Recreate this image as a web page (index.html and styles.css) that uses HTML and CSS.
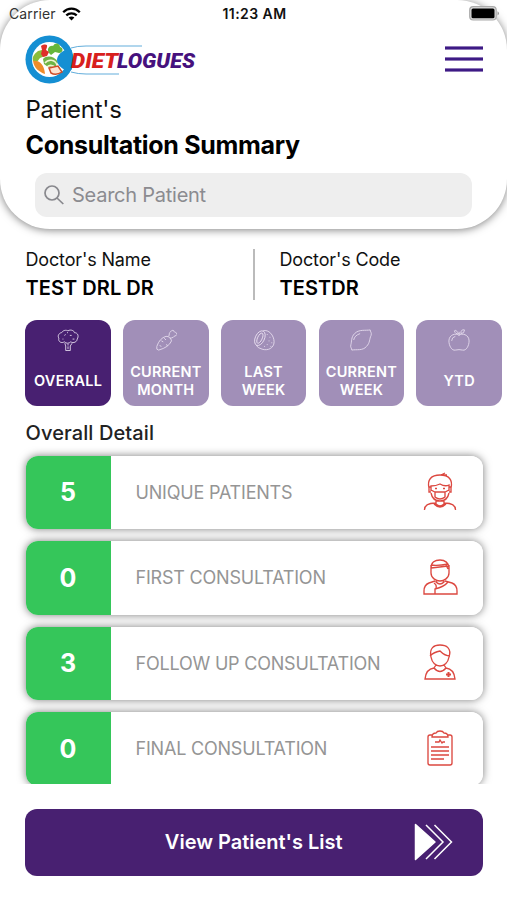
FILE: index.html
```html
<!DOCTYPE html>
<html lang="en">
<head>
<meta charset="utf-8">
<meta name="viewport" content="width=device-width, initial-scale=1">
<title>Dietlogues</title>
<link rel="stylesheet" href="styles.css">
</head>
<body>
<header class="header">
  <div class="status">
    <div class="carrier"><span>Carrier</span>
      <svg width="19" height="14" viewBox="0 0 19 14" fill="none" stroke="#000" stroke-width="2.3"><path d="M1.2 5.2C6 .5 13 .5 17.8 5.2M4.3 8.4c3-2.8 7.400-2.800 10.400 0"/><path d="M9.500 13.500 6.600 10.600c1.700-1.500 4.100-1.500 5.800 0z" fill="#000" stroke="none"/></svg>
    </div>
    <span class="clock">11:23 AM</span>
    <svg class="battery" width="31" height="15" viewBox="0 0 31 15"><rect x=".7" y=".7" width="26.500" height="13.300" rx="3.500" fill="#ddd" stroke="#aaa" stroke-width="1.200"/><rect x="2.500" y="2.500" width="23" height="9.700" rx="1.500"/><path d="M28.500 5.200q3 2.200 0 4.400z" fill="#999"/></svg>
  </div>
  <div class="brand">
    <svg width="174" height="52" viewBox="0 0 174 52">
      <circle cx="24.500" cy="25.500" r="24" fill="#158fd3"/><circle cx="24.500" cy="25.500" r="17.500" fill="#fff"/>
      <path d="M24 19c-3-4 1-8 4-7 2-4 7-3 7 1 4 1 3 6-1 6l-4-1-4 3z" fill="#65b63c"/>
      <path d="M13 17c-4 3-6 6-5 10l4 1 3-4 5-2 1-3-4-3z" fill="#8abc39"/>
      <path d="M16 12c3-2 7-2 6 1l-1 3 3 2-2 4-4 1-2-3 1-4z" fill="#df3029"/>
      <path d="M8 27c6-1 11 3 12 13-6-2-11-6-12-13z" fill="#ee8c2a"/>
      <path d="M18 25c4-4 11-3 15 3l-2 4-8 1-4-3z" fill="#6fb445"/>
      <path d="M20 29c3-4 10-4 12 2M22 33q4-4 9 1" fill="none" stroke="#f0f5d0" stroke-width="1.500"/>
      <path d="m24 34 9-2 4 6q-6 4-11 1z" fill="#ffe3cf" stroke="#ce4c26" stroke-width="1.500"/>
      <path d="M44 14c-7 3-12 7-12 12s5 9 12 12l3-3V17z" fill="#158fd3"/>
      <path d="M46 14q6-2 15-2h56M46 38q7 2 15 2h33" fill="none" stroke="#62addb" stroke-width="1"/>
      <g font-family="Roboto, sans-serif" font-weight="900" font-size="21" font-style="italic"><text x="46" y="33.500" textLength="47" lengthAdjust="spacingAndGlyphs" fill="#d8201d">DIET</text><text x="92" y="33.500" textLength="78" lengthAdjust="spacingAndGlyphs" fill="#46117d">LOGUES</text></g>
    </svg>
    <div class="menu"><i></i><i></i><i></i></div>
  </div>
  <h1><span class="sub">Patient's</span><span class="title">Consultation Summary</span></h1>
  <div class="search">
    <svg width="20" height="20" viewBox="0 0 20 20" fill="none" stroke="#88888d" stroke-width="1.700"><circle cx="8" cy="8" r="7"/><path d="m13 13 6.300 6"/></svg>
    <span>Search Patient</span>
  </div>
</header>
<main>
  <section class="doctor">
    <div class="cell"><span class="label">Doctor's Name</span><strong>TEST DRL DR</strong></div>
    <div class="cell code"><span class="label">Doctor's Code</span><strong>TESTDR</strong></div>
  </section>
  <nav class="tabs">
    <div class="tab active"><svg viewBox="0 0 24 24"><path d="M8 14c-3 2-7 0-6-4-2-3 1-6 3-6 2-3 5-3 7-2 3-2 7 0 7 2 4 0 5 4 3 7 0 3-4 5-7 3-2 2-5 2-7 0zM8.500 15.500l1 3v5h5v-5l2-3M12 18v-2M8 7l1.500-1M14 7h2M6 11h1M17 11h2M11 4h1M12 22v-3"/></svg><b>OVERALL</b></div>
    <div class="tab"><svg viewBox="0 0 24 24"><path d="M12 8q5 0 6 5-3 7-14 10-3 0-2-4 3-9 10-11zM15 8c1-2 0-4 2-5 1-2 4-2 4 0 0 1 3 0 3 3-1 2-3 1-4 3q-2 1-4 1M10 10l2 2M7 13l2 1M12 17l2 1M5 18l2 1"/></svg><b>CURRENT<br>MONTH</b></div>
    <div class="tab"><svg viewBox="0 0 24 24"><ellipse cx="7.500" cy="10" rx="5" ry="8.500" transform="rotate(25 7.500 10)"/><ellipse cx="7.500" cy="10" rx="2.500" ry="6" transform="rotate(25 7.500 10)"/><path d="M11 2c6-2 12 5 12 12s-7 10-13 8q-5-1-7-5M15 6h1M18 9h1M17 13h1M20 15h1M15 17h1M12 19h1M19 19h1"/></svg><b>LAST<br>WEEK</b></div>
    <div class="tab"><svg viewBox="0 0 24 24"><path d="M22 1c-5 1-12-1-17 4-4 4-3 9-4 12-1 3 1 4 1 6 5-1 12 1 16-4 4-4 3-8 5-12 1-3-1-4-1-6zM4 12q1-5 7-7"/></svg><b>CURRENT<br>WEEK</b></div>
    <div class="tab"><svg viewBox="0 0 24 24"><path d="M12 7c3-3 11-1 11 6 0 5-3 11-7 10q-4-1-8 0C4 24 1 18 1 13 1 6 9 4 12 7zM12 7q1-2 0-4M11 4Q8 0 7 2q1 4 5 3zM14 5q0-5 4-4 0 4-4 4zM4 13q0-4 4-5"/></svg><b>YTD</b></div>
  </nav>
  <h2>Overall Detail</h2>
  <section class="list">
    <article class="card"><b class="count">5</b><span>UNIQUE PATIENTS</span>
      <svg width="36" height="40" viewBox="0 0 36 40"><path d="M7 16C5 8 9 3 18 3c9 0 13 5 11 13M9 19v-5q5 0 9-2 5 3 9 1v6M19 3l4-2M21 3h4M9 15H7v5h2M27 15h2v5h-2M9 21c1 5 4 8 9 8s8-3 9-8M9 18l4 2h10l4-2M13 20v5q5 4 10 0v-5M13 16.500h2M21 16.500h2M14 29v3q4 4 8 0v-3M2.500 38c0-6 5-7 11-7M33.500 38c0-6-5-7-11-7M12 32q6 6 12 0"/></svg></article>
    <article class="card"><b class="count">0</b><span>FIRST CONSULTATION</span>
      <svg width="36" height="40" viewBox="0 0 36 40"><path d="M9 10C9 4 13 2 18 2s9 3 9 8M9 7q7 1 17-1M9 10q9-1 17-2M9 7v8c0 5 5 8 9 8s9-3 9-8V7M24 7l2 4M14 22v2q4 4 8 0v-2M13 23l-6 2q-5 2-5 8v3h33v-3q0-6-5-8l-7-2M12 25q3 2 2 5M26 24q-4 5-13 7v5"/></svg></article>
    <article class="card"><b class="count">3</b><span>FOLLOW UP CONSULTATION</span>
      <svg width="36" height="40" viewBox="0 0 36 40"><path d="M9 14C7 5 12 2 18 2s12 3 9 12M8 13q4-4 10-5 5 5 10 5M9 14c1 6 5 9 9 9s8-3 9-9M14 22l-2 3q6 7 12 0l-2-3M12 25q-8 1-9 11h30q-1-10-9-11"/><path class="plus" d="M26.500 29v5M24 31.500h5"/></svg></article>
    <article class="card"><b class="count">0</b><span>FINAL CONSULTATION</span>
      <svg width="36" height="40" viewBox="0 0 36 40"><path d="M10 6H8q-2 0-2 2v26q0 2 2 2h20q2 0 2-2V8q0-2-2-2h-2M10 8q0-4 4-4 1-2 4-2t4 2q4 0 4 4zM13 13h4l1-2 2 3 1-1h2M9 18h18M9 22h18M9 26h18M9 30h13"/></svg></article>
  </section>
  <div class="view"><span>View Patient's List</span>
    <svg width="40" height="38" viewBox="0 0 40 38" fill="none" stroke="#fff" stroke-width="1.500"><path d="M1.500 1.500 21 19 1.500 36.500z" fill="#fff" stroke-linejoin="round"/><path d="m12 2 17 17-17 17M20.500 2l17 17-17 17"/></svg></div>
</main>
</body>
</html>
```
FILE: styles.css
```css
* { box-sizing: border-box; }
body { margin: 0; width: 507px; height: 900px; overflow: hidden; background: #fff; color: #111; font-family: Inter, "Liberation Sans", sans-serif; }
svg { display: block; flex: none; }
.header { height: 229px; border-radius: 50px; background: #fff; box-shadow: 0 1px 8px rgba(0,0,0,.5); }
.status { height: 27px; padding: 0 7px 0 9px; display: grid; grid-template-columns: 1fr auto 1fr; align-items: center; font-size: 14px; }
.carrier { display: flex; align-items: center; gap: 6px; color: #333; letter-spacing: .1px; }
.clock { font-weight: 600; letter-spacing: .45px; }
.battery { justify-self: end; }
.brand { height: 65px; display: flex; align-items: flex-start; justify-content: space-between; padding: 7px 24px 0 25px; }
.menu { width: 38px; display: grid; gap: 7px; padding-top: 12px; }
.menu i { height: 4px; background: #3d1a85; border: solid #8e78b8; border-width: .5px 0; }
h1 { margin: 0; padding-left: 25.500px; display: grid; font-weight: 400; }
.sub { font-size: 24px; line-height: 35px; letter-spacing: -.25px; }
.title { font-size: 25px; line-height: 36px; font-weight: 700; color: #000; letter-spacing: -.3px; }
.search { height: 44px; margin: 10px 35px 0; padding-left: 9px; border-radius: 12px; background: #eee; display: flex; align-items: center; gap: 8px; color: #8b8b90; font-size: 20px; letter-spacing: -.25px; }
.doctor { display: grid; grid-template-columns: 255px 1fr; margin-top: 20px; height: 51px; }
.cell { padding-left: 25.500px; display: grid; grid-template-rows: 21px 28px; align-items: center; border-right: 2px solid #bbb; }
.code { padding-left: 24.500px; border: 0; }
.label { font-size: 18px; letter-spacing: -.15px; }
.cell strong { font-size: 20px; font-weight: 600; color: #000; padding-top: 7px; letter-spacing: .05px; }
.tabs { display: flex; gap: 12.300px; margin: 20px 0 0 25.300px; }
.tab { width: 85.500px; height: 85.500px; flex: none; border-radius: 12px; background: #a18fb8; color: #fff; padding-top: 9px; }
.tab.active { background: #482071; }
.tab svg { width: 22px; height: 22px; margin: 0 auto; fill: none; stroke: #e7ddef; stroke-width: .95; }
.tab b { height: 35px; margin-top: 12px; display: flex; align-items: center; justify-content: center; text-align: center; font-size: 14.500px; line-height: 17.500px; font-weight: 600; letter-spacing: .25px; }
h2 { margin: 14.500px 0 0 25.500px; font-size: 20px; line-height: 26px; font-weight: 500; color: #222; letter-spacing: .1px; }
.list { height: 344px; margin-top: -6px; padding: 15.500px 24.500px 0 25.500px; overflow: hidden; display: flex; flex-direction: column; gap: 12px; }
.card { height: 73.500px; flex: none; border-radius: 12px; background: linear-gradient(90deg, #35c65a 85.500px, #fff 85.500px); box-shadow: 0 0 9px rgba(0,0,0,.52); display: flex; align-items: center; padding-right: 25px; }
.count { width: 85px; text-align: center; color: #fff; font-size: 25px; font-weight: 700; }
.card span { flex: 1; padding-left: 25px; font-size: 18px; color: #959595; letter-spacing: -.2px; }
.card svg { fill: none; stroke: #dc4840; stroke-width: 1.350; }
.card .plus { stroke-width: 2; }
.view { height: 67px; margin: 24.500px 24.500px 0 25px; border-radius: 12px; background: #482071; color: #fff; display: grid; grid-template-columns: 1fr auto 1fr; align-items: center; font-size: 20px; font-weight: 600; }
.view span { grid-column: 2; }
.view svg { justify-self: end; margin-right: 29px; }
```
